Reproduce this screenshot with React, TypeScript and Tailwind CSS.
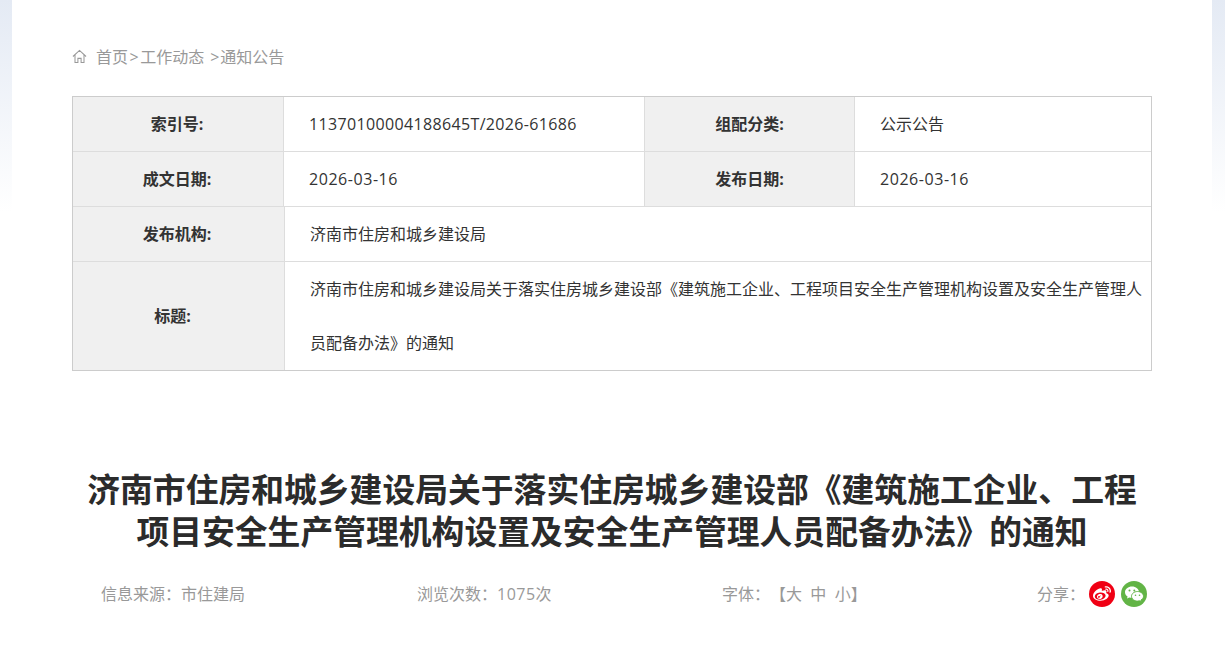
import { FaWeibo } from 'react-icons/fa';

const labelCls = 'flex items-center justify-center bg-[#f0f0f0] font-bold text-[#333]';
const cjk = { fontFamily: '"Open Sans", "Noto Sans CJK SC", sans-serif' };

const HomeIcon = () => (
  <svg viewBox="0 0 16 16" className="h-[15px] w-[15px] text-[#999]" fill="none" stroke="currentColor" strokeWidth="1.1">
    <path d="M1 8 8 1.5 15 8M3.2 6.5V14.5H6.3V10H9.7V14.5H12.8V6.5" />
  </svg>
);

const WechatIcon = () => (
  <svg viewBox="0 0 26 26" className="h-[26px] w-[26px]">
    <path d="M11 5.5c-3.9 0-7 2.5-7 5.7 0 1.8 1 3.4 2.6 4.4l-.6 2 2.3-1.2c.8.2 1.7.4 2.7.4 3.9 0 7-2.6 7-5.7S14.900 5.500 11 5.500z" fill="#fff" />
    <path d="M16.500 10.500c-3.300 0-6 2.200-6 4.800s2.700 4.800 6 4.800c.7 0 1.400-.1 2-.3l1.900 1-.5-1.700c1.600-.9 2.600-2.300 2.600-3.800 0-2.600-2.700-4.800-6-4.800z" fill="#fff" stroke="#62b446" strokeWidth="1" />
    <circle cx="8.500" cy="9.500" r="1" fill="#62b446" />
    <circle cx="13.300" cy="9.500" r="1" fill="#62b446" />
    <circle cx="14.500" cy="14.300" r=".8" fill="#62b446" />
    <circle cx="18.500" cy="14.300" r=".8" fill="#62b446" />
  </svg>
);

const App = () => {
  return (
    <div
      className="h-[663px] overflow-hidden bg-white bg-[linear-gradient(to_bottom,#e4eaf4,#ffffff)] bg-[length:100%_212px] bg-no-repeat text-[16px] text-[#333]"
      style={cjk}
    >
      <div className="ml-[12px] mr-[13px] h-full bg-white px-[60px]">
        <div className="flex h-[96px] items-center gap-[9px] pt-[17px] text-[#999]">
          <HomeIcon />
          <span>
            首页<span className="mx-[1.5px]">&gt;</span>工作动态<span className="ml-[6px] mr-[1px]">&gt;</span>通知公告
          </span>
        </div>

        <div className="border border-[#ccc]">
          <div className="flex h-[55px] border-b border-[#ddd]">
            <div className={`${labelCls} w-[211px] border-r border-[#ddd] pr-[2px]`}>索引号:</div>
            <div className="flex w-[360px] items-center pl-[25px] tracking-[0.35px]">11370100004188645T/2026-61686</div>
            <div className={`${labelCls} w-[211px] border-x border-[#ddd]`}>组配分类:</div>
            <div className="flex flex-1 items-center pl-[25px]">公示公告</div>
          </div>
          <div className="flex h-[55px] border-b border-[#ddd]">
            <div className={`${labelCls} w-[211px] border-r border-[#ddd] pr-[2px]`}>成文日期:</div>
            <div className="flex w-[360px] items-center pl-[25px] tracking-[0.55px]">2026-03-16</div>
            <div className={`${labelCls} w-[211px] border-x border-[#ddd]`}>发布日期:</div>
            <div className="flex flex-1 items-center pl-[25px] tracking-[0.55px]">2026-03-16</div>
          </div>
          <div className="flex h-[55px] border-b border-[#ddd]">
            <div className={`${labelCls} w-[212px] border-r border-[#ddd] pr-[3px]`}>发布机构:</div>
            <div className="flex flex-1 items-center pl-[25px]">济南市住房和城乡建设局</div>
          </div>
          <div className="flex h-[108px]">
            <div className={`${labelCls} w-[212px] border-r border-[#ddd] pr-[12px]`}>标题:</div>
            <div className="flex-1 pl-[25px] pr-[8px] leading-[54px]">
              济南市住房和城乡建设局关于落实住房城乡建设部《建筑施工企业、工程项目安全生产管理机构设置及安全生产管理人员配备办法》的通知
            </div>
          </div>
        </div>

        <h1 className="mt-[98px] text-center text-[32.8px] leading-[42px] font-bold text-[#2b2b2b]">
          济南市住房和城乡建设局关于落实住房城乡建设部《建筑施工企业、工程项目安全生产管理机构设置及安全生产管理人员配备办法》的通知
        </h1>

        <div className="mt-[21px] flex h-[40px] items-center pl-[29px] text-[#999]">
          <div className="w-[316px]">信息来源：市住建局</div>
          <div className="w-[305px]">
            浏览次数：<span className="tracking-[0.5px]">1075</span>次
          </div>
          <div className="w-[315px]">
            字体：<span className="ml-[8px]">【大&nbsp;&nbsp;中&nbsp;&nbsp;小】</span>
          </div>
          <div className="flex items-center">
            <span>分享：</span>
            <span className="ml-[4px] flex h-[26px] w-[26px] items-center justify-center rounded-full bg-[#f00014] text-white">
              <FaWeibo className="h-[18px] w-[18px]" />
            </span>
            <span className="ml-[6px] flex h-[26px] w-[26px] items-center justify-center rounded-full bg-[#62b446]">
              <WechatIcon />
            </span>
          </div>
        </div>
      </div>
    </div>
  );
};

export default App;
